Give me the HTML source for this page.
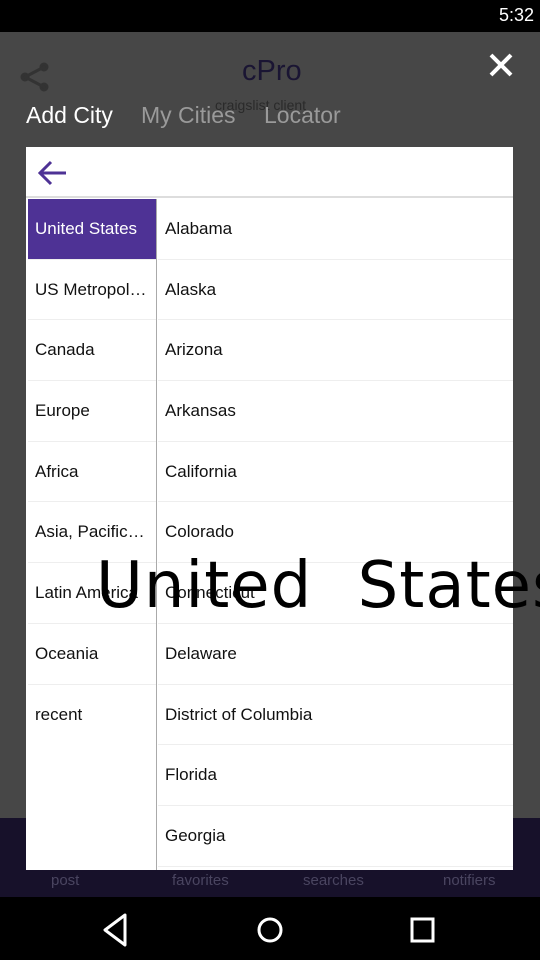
<!DOCTYPE html>
<html><head><meta charset="utf-8"><style>
*{margin:0;padding:0;box-sizing:border-box}
html,body{overflow:hidden}
body{width:540px;height:960px;background:#474747;font-family:"Liberation Sans",sans-serif;position:relative}
.sb{position:absolute;top:0;left:0;width:540px;height:32px;background:#000;color:#fff;font-size:18px}
.nav{position:absolute;top:897px;left:0;width:540px;height:63px;background:#000}
.bot{position:absolute;top:818px;left:0;width:540px;height:79px;background:#17112a}
.bot span{position:absolute;top:54px;font-size:15px;color:#4a4560}
.tab{position:absolute;top:102px;font-size:23px}
.dlg{position:absolute;left:26px;top:147px;width:487px;height:723px;background:#fff;overflow:hidden}
.hdr{height:51px;border-bottom:2px solid #ddd;position:relative}
.lc{position:absolute;left:2px;top:52px;width:129px;height:671px;border-right:1px solid #aaa}
.rc{position:absolute;left:132px;top:52px;width:355px}
.r{height:60.7px;line-height:60px;font-size:17px;color:#111;padding-left:7px;border-bottom:1px solid #eee;white-space:nowrap;overflow:hidden}
.sel{background:#4e3295;color:#fff}
.bigw{position:absolute;left:0;top:540px;width:540px;height:90px;overflow:hidden}
.big{position:absolute;left:96px;top:9px;font-family:"DejaVu Sans",sans-serif;font-size:64px;color:#000;letter-spacing:1px;word-spacing:24px;white-space:nowrap}
</style></head><body>
<div class="sb"><span style="position:absolute;right:6px;top:5px">5:32</span></div>
<svg style="position:absolute;left:20px;top:62px" width="30" height="30" viewBox="0 0 30 30"><g fill="#333" stroke="#333" stroke-width="3"><circle cx="5" cy="15" r="3"/><circle cx="24" cy="5" r="3"/><circle cx="24" cy="25" r="3"/><path d="M5 15L24 5M5 15L24 25" fill="none"/></g></svg>
<div style="position:absolute;left:242px;top:55px;font-size:29px;color:#1a1533">cPro</div>
<div style="position:absolute;left:215px;top:97px;font-size:14px;color:#2a2a2a">craigslist client</div>
<svg style="position:absolute;left:488px;top:52px" width="26" height="26"><path d="M3 3L23 23M23 3L3 23" stroke="#fff" stroke-width="4"/></svg>
<div class="tab" style="left:26px;color:#fff">Add City</div>
<div class="tab" style="left:141px;color:#9a9a9a">My Cities</div>
<div class="tab" style="left:264px;color:#9a9a9a">Locator</div>
<div class="bot"><span style="left:51px">post</span><span style="left:172px">favorites</span><span style="left:303px">searches</span><span style="left:443px">notifiers</span></div>
<div class="nav"><svg width="540" height="63"><path d="M125 18L105 33L125 48Z" fill="none" stroke="#fff" stroke-width="3" stroke-linejoin="round"/><circle cx="270" cy="33" r="11" fill="none" stroke="#fff" stroke-width="3"/><rect x="412" y="22" width="21" height="22" fill="none" stroke="#fff" stroke-width="3"/></svg></div>
<div class="dlg">
<div class="hdr"><svg style="position:absolute;left:10px;top:11px" width="32" height="30"><path d="M4 15H30M15 4L4 15L15 26" fill="none" stroke="#4e3295" stroke-width="3"/></svg></div>
<div class="lc">
<div class="r sel">United States</div><div class="r">US Metropol…</div><div class="r">Canada</div><div class="r">Europe</div><div class="r">Africa</div><div class="r">Asia, Pacific…</div><div class="r">Latin America</div><div class="r">Oceania</div><div class="r" style="border:none">recent</div>
</div>
<div class="rc">
<div class="r">Alabama</div><div class="r">Alaska</div><div class="r">Arizona</div><div class="r">Arkansas</div><div class="r">California</div><div class="r">Colorado</div><div class="r">Connecticut</div><div class="r">Delaware</div><div class="r">District of Columbia</div><div class="r">Florida</div><div class="r">Georgia</div>
</div>
</div>
<div class="bigw"><div class="big">United States</div></div>
</body></html>
